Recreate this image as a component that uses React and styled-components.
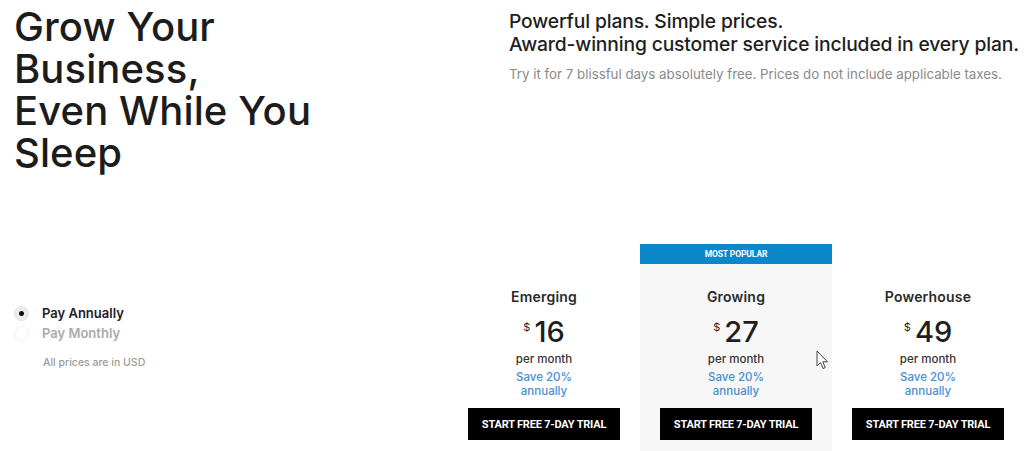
import styled, { createGlobalStyle } from "styled-components";

const GlobalStyle = createGlobalStyle`
  * { box-sizing: border-box; }
  body {
    margin: 0;
    background: #fff;
    font-family: "Inter", "Liberation Sans", sans-serif;
    color: #1e1e1e;
  }
`;

const Page = styled.div`
  position: relative;
  width: 1024px;
  height: 451px;
  overflow: hidden;
`;

const Header = styled.header`
  display: flex;
  align-items: flex-start;
`;

const Hero = styled.h1`
  width: 509px;
  margin: 6px 0 0;
  padding-left: 14px;
  font-size: 40px;
  line-height: 42px;
  font-weight: 500;
  letter-spacing: 0.1px;
  color: #1c1c1c;
`;

const Intro = styled.div`
  padding-top: 10px;
`;

const Lead = styled.p`
  margin: 0;
  font-size: 19.3px;
  line-height: 23px;
  font-weight: 500;
  letter-spacing: -0.15px;
  color: #1e1e1e;
`;

const Note = styled.p`
  margin: 9px 0 0;
  font-size: 13.3px;
  line-height: 18px;
  color: #8a8a8a;
`;

const Pricing = styled.section`
  display: flex;
  align-items: stretch;
  margin-top: 70px;
`;

const Options = styled.div`
  width: 448px;
  padding-top: 59px;
`;

const Option = styled.label`
  display: flex;
  align-items: center;
  gap: 13px;
  height: 20px;
  padding-left: 14px;
  font-size: 13px;
  font-weight: 600;
  color: ${(p) => (p.$active ? "#222" : "#ababab")};
`;

const Radio = styled.span`
  display: flex;
  align-items: center;
  justify-content: center;
  width: 15px;
  height: 15px;
  border-radius: 50%;
  background: ${(p) => (p.$checked ? "#ececec" : "#fff")};
  border: 1px solid ${(p) => (p.$checked ? "#e2e2e2" : "#f0f0f0")};

  &::after {
    content: "";
    display: ${(p) => (p.$checked ? "block" : "none")};
    width: 5px;
    height: 5px;
    border-radius: 50%;
    background: #111;
  }
`;

const Currency = styled.p`
  margin: 13px 0 0 43px;
  font-size: 10.5px;
  font-weight: 500;
  color: #9a9a9a;
`;

const Plans = styled.div`
  display: grid;
  grid-template-columns: repeat(3, 192px);
`;

const Plan = styled.div`
  display: flex;
  flex-direction: column;
  align-items: center;
  padding: ${(p) => (p.$popular ? "0" : "44px")} 0 12px;
  background: ${(p) => (p.$popular ? "#f7f7f7" : "#fff")};
`;

const Badge = styled.div`
  align-self: stretch;
  height: 20px;
  margin-bottom: 24px;
  background: #0a88ca;
  color: #fff;
  font-family: "Roboto", sans-serif;
  font-size: 8.5px;
  font-weight: 700;
  line-height: 20px;
  text-align: center;
  letter-spacing: -0.1px;
`;

const PlanName = styled.h3`
  margin: 0;
  font-size: 14px;
  line-height: 18px;
  font-weight: 600;
  letter-spacing: 0.2px;
  color: #2a2a2a;
`;

const Price = styled.div`
  display: flex;
  align-items: flex-start;
  margin-top: 10px;
  font-size: 29px;
  line-height: 32px;
  font-weight: 500;
  color: #1e1e1e;

  sup {
    font-size: 11px;
    line-height: 11px;
    margin: 6px 4px 0 0;
    font-weight: 400;
  }
`;

const Period = styled.div`
  margin-top: 4px;
  font-size: 11.5px;
  line-height: 14px;
  font-weight: 500;
  color: #333;
`;

const Save = styled.div`
  margin-top: 4px;
  font-size: 11.5px;
  line-height: 14px;
  font-weight: 500;
  color: #3f8fd8;
  text-align: center;
`;

const TrialButton = styled.button`
  width: 152px;
  height: 32px;
  margin-top: 10px;
  border: 0;
  background: #000;
  color: #fff;
  font-family: "Roboto", sans-serif;
  font-size: 11px;
  font-weight: 700;
  letter-spacing: -0.2px;
  cursor: pointer;
`;

const Cursor = styled.svg`
  position: absolute;
  left: 816px;
  top: 350px;
`;

const plans = [
  { name: "Emerging", price: 16 },
  { name: "Growing", price: 27, popular: true },
  { name: "Powerhouse", price: 49 },
];

export default function App() {
  return (
    <Page>
      <GlobalStyle />
      <Header>
        <Hero>
          Grow Your
          <br />
          Business,
          <br />
          Even While You
          <br />
          Sleep
        </Hero>
        <Intro>
          <Lead>
            Powerful plans. Simple prices.
            <br />
            Award-winning customer service included in every plan.
          </Lead>
          <Note>
            Try it for 7 blissful days absolutely free. Prices do not include
            applicable taxes.
          </Note>
        </Intro>
      </Header>

      <Pricing>
        <Options>
          <Option $active>
            <Radio $checked />
            Pay Annually
          </Option>
          <Option>
            <Radio />
            Pay Monthly
          </Option>
          <Currency>All prices are in USD</Currency>
        </Options>
        <Plans>
          {plans.map((plan) => (
            <Plan key={plan.name} $popular={plan.popular}>
              {plan.popular && <Badge>MOST POPULAR</Badge>}
              <PlanName>{plan.name}</PlanName>
              <Price>
                <sup>$</sup>
                {plan.price}
              </Price>
              <Period>per month</Period>
              <Save>
                Save 20%
                <br />
                annually
              </Save>
              <TrialButton>START FREE 7-DAY TRIAL</TrialButton>
            </Plan>
          ))}
        </Plans>
      </Pricing>

      <Cursor width="13" height="20" viewBox="0 0 13 20">
        <path
          d="M1 1 L1 16 L4.5 12.5 L7 18.5 L9.2 17.6 L6.8 11.8 L11.5 11.8 Z"
          fill="#fff"
          stroke="#444"
          strokeWidth="1"
          strokeLinejoin="round"
        />
      </Cursor>
    </Page>
  );
}
